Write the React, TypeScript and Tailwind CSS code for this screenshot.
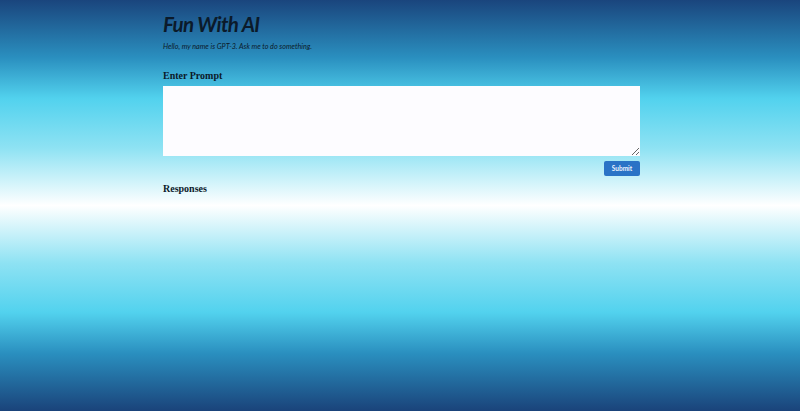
export default function App() {
  return (
    <main className="w-full h-[411px] overflow-hidden bg-[linear-gradient(to_bottom,#1a457d_0%,#2a8fbf_14%,#52d2ee_24%,#8ee2f3_36%,#ffffff_50%,#8ee2f3_64%,#52d2ee_76%,#2a8fbf_86%,#1a437a_100%)]">
      <div className="w-[477px] ml-[163px] flex flex-col">
        <h1 className="mt-[13px] text-[20.5px] leading-[22px] font-bold italic text-[#0b1a2a] font-['Lato',sans-serif] tracking-[-0.6px]">
          Fun With AI
        </h1>
        <p className="mt-[8px] text-[7.2px] leading-[8px] italic text-[#0b1a2a] font-['Lato',sans-serif]">
          Hello, my name is GPT-3. Ask me to do something.
        </p>
        <h3 className="mt-[19px] text-[10px] leading-[12px] font-bold text-[#0b1a2a] font-['Liberation_Serif',serif]">
          Enter Prompt
        </h3>
        <textarea className="mt-[4px] w-full h-[70px] bg-[#fdfcff] border-0 outline-none resize-y block" />
        <div className="flex justify-end mt-[5px]">
          <button className="w-[36px] h-[15px] rounded-[2px] bg-[#2a73c6] text-[#eef4ff] text-[6.5px] font-bold font-['Lato',sans-serif]">
            Submit
          </button>
        </div>
        <h3 className="mt-[7px] text-[10px] leading-[12px] font-bold text-[#0b1a2a] font-['Liberation_Serif',serif]">
          Responses
        </h3>
      </div>
    </main>
  );
}
